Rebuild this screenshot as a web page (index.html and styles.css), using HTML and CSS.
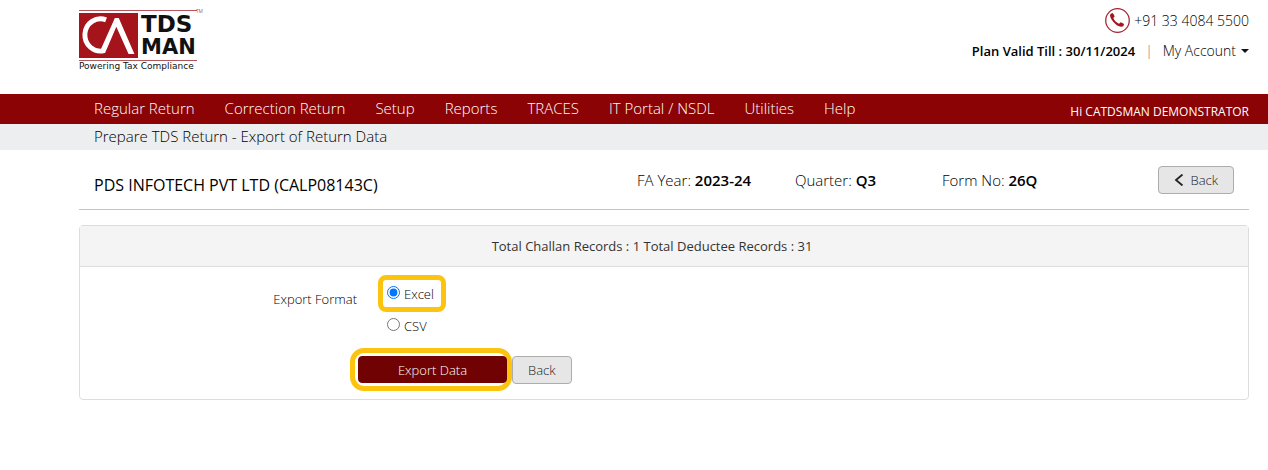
FILE: index.html
```html
<!DOCTYPE html>
<html lang="en">

<head>
    <meta charset="UTF-8">
    <meta name="viewport" content="width=device-width, initial-scale=1.0">
    <title>Export of Return Data</title>
    <link rel="stylesheet" href="styles.css">
</head>

<body>
    <header class="top">
        <a href="#" class="logo">
            <span class="logo-main">
                <svg class="logo-mark" viewBox="0 0 59 46" aria-label="CA">
                    <path d="M27 7A16 16.500 0 1 0 25 38.500" fill="none" stroke="#fff" stroke-width="5" />
                    <path d="M20 41L36 5L40 5L56 42L50 42L37.500 14L26 41Z" fill="#fff" />
                </svg>
                <span class="logo-name">
                    <span class="logo-tds">TDS</span>
                    <span class="logo-man">MAN</span>
                </span>
            </span>
            <span class="logo-tm">TM</span>
            <span class="logo-tag">Powering Tax Compliance</span>
        </a>
        <div class="contact">
            <div class="phone">
                <svg class="phone-icon" viewBox="0 0 24 24">
                    <circle cx="12" cy="12" r="11.3" fill="#fff" stroke="#a5242c" stroke-width="1.2" />
                    <path d="M5.500 5.500L7.500 4.800L9.300 8L8 9.700C9 12.300 11 14.300 13.500 15.200L15.200 13.700L18.300 15.300L17.500 17.500C15.500 18.500 12.500 17.500 10 15.300C7 12.500 4.800 9.500 4.800 7Z" fill="#a5141c" />
                </svg>
                <span>+91 33 4084 5500</span>
            </div>
            <div class="plan">
                <b>Plan Valid Till : 30/11/2024</b>
                <span class="sep">|</span>
                <a href="#" class="account">My Account <span class="caret"></span></a>
            </div>
        </div>
    </header>

    <nav class="menu">
        <ul>
            <li><a href="#">Regular Return</a></li>
            <li><a href="#">Correction Return</a></li>
            <li><a href="#">Setup</a></li>
            <li><a href="#">Reports</a></li>
            <li><a href="#">TRACES</a></li>
            <li><a href="#">IT Portal / NSDL</a></li>
            <li><a href="#">Utilities</a></li>
            <li><a href="#">Help</a></li>
        </ul>
        <span class="user">Hi CATDSMAN DEMONSTRATOR</span>
    </nav>
    <div class="crumb">Prepare TDS Return - Export of Return Data</div>

    <main class="content">
        <div class="company">
            <h1>PDS INFOTECH PVT LTD (CALP08143C)</h1>
            <span class="info">FA Year: <b>2023-24</b></span>
            <span class="info">Quarter: <b>Q3</b></span>
            <span class="info">Form No: <b>26Q</b></span>
            <button type="button" class="btn btn-top">
                <svg class="chevron" viewBox="0 0 10 12">
                    <path d="M8.500 0.500L2 6L8.500 11.500" fill="none" stroke="#222" stroke-width="1.800" />
                </svg>
                Back
            </button>
        </div>

        <form class="panel">
            <h2>Total Challan Records : 1 Total Deductee Records : 31</h2>
            <div class="panel-body">
                <div class="format" role="radiogroup" aria-labelledby="formatLabel">
                    <span class="format-label" id="formatLabel">Export Format</span>
                    <div class="options">
                        <label class="option marked" for="excel"><input type="radio" id="excel" name="format" checked>Excel</label>
                        <label class="option" for="csv"><input type="radio" id="csv" name="format">CSV</label>
                    </div>
                </div>
                <div class="actions">
                    <div class="marked-btn"><button type="button" class="btn btn-export">Export Data</button></div>
                    <button type="button" class="btn">Back</button>
                </div>
            </div>
        </form>
    </main>
</body>

</html>
```
FILE: styles.css
```css
* {
    box-sizing: border-box;
}

body {
    margin: 0;
    background-color: #fff;
    color: #000;
    font-family: "Open Sans", "Noto Sans", sans-serif;
    font-size: 14px;
    font-weight: 300;
    line-height: 20px;
}

a {
    color: inherit;
    text-decoration: none;
}

b {
    font-weight: 600;
}

.top {
    display: flex;
    justify-content: space-between;
    height: 94px;
    padding: 8px 19px 0 79px;
}

.logo {
    position: relative;
    width: 118px;
    padding-top: 2px;
    color: #111;
}

.logo-main {
    display: flex;
    height: 51px;
    padding: 2px 0;
    border-top: 1px solid #b5565a;
    border-bottom: 1px solid #b5565a;
}

.logo-mark {
    flex-shrink: 0;
    width: 59px;
    height: 45px;
    background-color: #a5141a;
}

.logo-name {
    padding-left: 3px;
    font-family: "DejaVu Sans", sans-serif;
    font-weight: 700;
    line-height: 23px;
}

.logo-tds,
.logo-man {
    display: block;
}

.logo-tds {
    font-size: 23px;
}

.logo-man {
    font-size: 21px;
}

.logo-tm {
    position: absolute;
    top: 0;
    left: 117px;
    font-size: 5px;
    line-height: 6px;
}

.logo-tag {
    display: block;
    font-family: "DejaVu Sans", sans-serif;
    font-size: 9px;
    font-weight: 400;
    line-height: 10px;
    white-space: nowrap;
}

.contact {
    display: flex;
    flex-direction: column;
    align-items: flex-end;
    gap: 8px;
}

.phone,
.plan {
    display: flex;
    align-items: center;
}

.phone {
    gap: 4px;
}

.plan b {
    font-size: 13px;
}

.phone-icon {
    width: 25px;
    height: 25px;
}

.sep {
    padding: 0 10px;
    color: #777;
}

.account {
    display: flex;
    align-items: center;
    gap: 5px;
}

.caret {
    border: 4px solid transparent;
    border-top-color: #111;
    border-bottom: 0;
}

.menu {
    display: flex;
    justify-content: space-between;
    height: 30px;
    padding: 0 19px 0 94px;
    background-color: #8b0304;
    color: #fff;
    line-height: 30px;
}

.menu ul {
    display: flex;
    gap: 30px;
    margin: 0;
    padding: 0;
    font-size: 15px;
    line-height: 28px;
    list-style: none;
}

.user {
    padding-top: 3px;
    font-size: 12px;
    font-weight: 400;
}

.crumb {
    height: 26px;
    padding-left: 94px;
    background-color: #edeeef;
    font-size: 15px;
    line-height: 24px;
}

.content {
    padding: 0 19px 0 79px;
}

.company {
    display: grid;
    grid-template-columns: 543px 158px 147px 1fr auto;
    align-items: center;
    height: 60px;
    padding: 0 15px;
    border-bottom: 1px solid #c4c4c4;
}

h1 {
    margin: 0;
    padding-top: 10px;
    font-size: 16px;
    font-weight: 500;
}

.info {
    font-size: 15px;
}

.btn {
    height: 28px;
    padding: 0 15px;
    border: 1px solid #adadad;
    border-radius: 4px;
    background-color: #e6e6e6;
    color: #222;
    font: inherit;
    font-size: 13px;
    cursor: pointer;
}

.btn-top {
    display: flex;
    align-items: center;
    gap: 6px;
}

.chevron {
    width: 10px;
    height: 12px;
}

.panel {
    margin-top: 15px;
    border: 1px solid #ddd;
    border-radius: 4px;
}

h2 {
    margin: 0;
    padding-right: 24px;
    border-bottom: 1px solid #ddd;
    background-color: #f4f4f4;
    color: #333;
    font-size: 13px;
    font-weight: 500;
    line-height: 40px;
    text-align: center;
}

.panel-body {
    padding: 8px 0;
    font-size: 13px;
}

.format {
    display: flex;
}

.format-label {
    width: 277px;
    padding-top: 14px;
    text-align: right;
}

.options {
    display: flex;
    flex-direction: column;
    align-items: flex-start;
    padding-left: 21px;
}

.option {
    display: flex;
    align-items: center;
    height: 27px;
    padding: 0 9px;
}

.option input {
    width: 13px;
    height: 13px;
    margin: 0 4px 2px 0;
}

.marked {
    height: 37px;
    padding: 0 7px 0 4px;
    border: 5px solid #fcc40f;
    border-radius: 8px;
}

.actions {
    display: flex;
    align-items: center;
    padding: 9px 0 0 270px;
}

.marked-btn {
    padding: 3px 0 3px 3px;
    border: 5px solid #fcc40f;
    border-radius: 14px;
}

.btn-export {
    display: block;
    width: 149px;
    height: 27px;
    border-color: #700204;
    background-color: #700204;
    color: #fff;
}
```
